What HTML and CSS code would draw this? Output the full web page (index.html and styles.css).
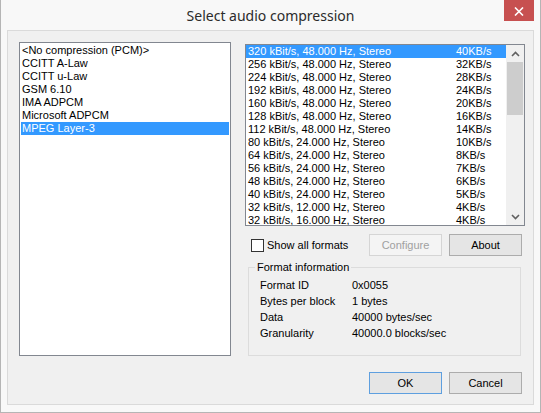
FILE: index.html
```html
<!DOCTYPE html>
<html>
<head>
<meta charset="utf-8">
<title>Select audio compression</title>
<link rel="stylesheet" href="styles.css">
</head>
<body>
<div class="window">
  <div class="titlebar">
    <div class="title">Select audio compression</div>
    <div class="close"><svg width="10" height="9" viewBox="0 0 10 9"><path d="M1 0.5 L9 8.5 M9 0.5 L1 8.5" stroke="#fff" stroke-width="1.6" fill="none"/></svg></div>
  </div>
  <div class="client">
    <div class="main">
      <div class="listbox formats">
        <div class="item">&lt;No compression (PCM)&gt;</div>
        <div class="item">CCITT A-Law</div>
        <div class="item">CCITT u-Law</div>
        <div class="item">GSM 6.10</div>
        <div class="item">IMA ADPCM</div>
        <div class="item">Microsoft ADPCM</div>
        <div class="item selected">MPEG Layer-3</div>
      </div>
      <div class="side">
        <div class="listbox attributes">
          <div class="rows">
            <div class="row selected"><span class="c1">320 kBit/s, 48.000 Hz, Stereo</span><span>40KB/s</span></div>
            <div class="row"><span class="c1">256 kBit/s, 48.000 Hz, Stereo</span><span>32KB/s</span></div>
            <div class="row"><span class="c1">224 kBit/s, 48.000 Hz, Stereo</span><span>28KB/s</span></div>
            <div class="row"><span class="c1">192 kBit/s, 48.000 Hz, Stereo</span><span>24KB/s</span></div>
            <div class="row"><span class="c1">160 kBit/s, 48.000 Hz, Stereo</span><span>20KB/s</span></div>
            <div class="row"><span class="c1">128 kBit/s, 48.000 Hz, Stereo</span><span>16KB/s</span></div>
            <div class="row"><span class="c1">112 kBit/s, 48.000 Hz, Stereo</span><span>14KB/s</span></div>
            <div class="row"><span class="c1">80 kBit/s, 24.000 Hz, Stereo</span><span>10KB/s</span></div>
            <div class="row"><span class="c1">64 kBit/s, 24.000 Hz, Stereo</span><span>8KB/s</span></div>
            <div class="row"><span class="c1">56 kBit/s, 24.000 Hz, Stereo</span><span>7KB/s</span></div>
            <div class="row"><span class="c1">48 kBit/s, 24.000 Hz, Stereo</span><span>6KB/s</span></div>
            <div class="row"><span class="c1">40 kBit/s, 24.000 Hz, Stereo</span><span>5KB/s</span></div>
            <div class="row"><span class="c1">32 kBit/s, 12.000 Hz, Stereo</span><span>4KB/s</span></div>
            <div class="row"><span class="c1">32 kBit/s, 16.000 Hz, Stereo</span><span>4KB/s</span></div>
          </div>
          <div class="scrollbar">
            <div class="arrow"><svg width="9" height="6" viewBox="0 0 9 6"><path d="M1 5 L4.5 1.5 L8 5" stroke="#606060" stroke-width="1.6" fill="none"/></svg></div>
            <div class="track"><div class="thumb"></div></div>
            <div class="arrow"><svg width="9" height="6" viewBox="0 0 9 6"><path d="M1 1 L4.5 4.5 L8 1" stroke="#606060" stroke-width="1.6" fill="none"/></svg></div>
          </div>
        </div>
        <div class="controls">
          <label class="check"><span class="box"></span>Show all formats</label>
          <div class="buttons">
            <button class="btn" disabled>Configure</button>
            <button class="btn">About</button>
          </div>
        </div>
        <fieldset class="group">
          <legend>Format information</legend>
          <div class="info">
            <span>Format ID</span><span>0x0055</span>
            <span>Bytes per block</span><span>1 bytes</span>
            <span>Data</span><span>40000 bytes/sec</span>
            <span>Granularity</span><span>40000.0 blocks/sec</span>
          </div>
        </fieldset>
      </div>
    </div>
    <div class="footer">
      <button class="btn default">OK</button>
      <button class="btn">Cancel</button>
    </div>
  </div>
</div>
</body>
</html>
```
FILE: styles.css
```css
html, body {
  margin: 0;
  padding: 0;
}
body {
  font-family: "Liberation Sans", Arial, sans-serif;
  font-size: 11px;
  color: #000;
  background: #fff;
}
.window {
  width: 541px;
  height: 413px;
  box-sizing: border-box;
  background: #f8f8f8;
  border: 1px solid #b5b5b5;
  border-top: none;
  display: flex;
  flex-direction: column;
}
.titlebar {
  height: 30px;
  flex: none;
  display: grid;
  grid-template-columns: 1fr auto 1fr;
  align-items: start;
}
.title {
  grid-column: 2;
  font-family: "Noto Sans", "Open Sans", sans-serif;
  font-size: 14px;
  line-height: 20px;
  padding-top: 6px;
  color: #2b2b2b;
  white-space: nowrap;
}
.close {
  grid-column: 3;
  justify-self: end;
  width: 30px;
  height: 21px;
  margin-right: 6px;
  background: #c75050;
  display: flex;
  align-items: center;
  justify-content: center;
}
.close svg { display: block; margin-top: 1px; }
.client {
  flex: 1;
  margin: 0 6px 7px 6px;
  border: 1px solid #dadada;
  background: #f0f0f0;
  padding: 11px 8px 0 11px;
  display: flex;
  flex-direction: column;
}
.main {
  display: flex;
  gap: 14px;
  height: 314px;
}
.listbox {
  box-sizing: border-box;
  border: 1px solid #828790;
  background: #fff;
}
.formats {
  width: 212px;
  height: 314px;
  padding: 1px 1px 0 1px;
}
.item {
  height: 13px;
  line-height: 13px;
  padding-left: 1px;
  white-space: nowrap;
}
.selected {
  background: #3399ff;
  color: #fff;
}
.side {
  width: 280px;
  display: flex;
  flex-direction: column;
}
.attributes {
  margin-top: 2px;
  height: 182px;
  display: flex;
}
.rows {
  flex: 1;
  overflow: hidden;
}
.row {
  height: 13px;
  line-height: 13px;
  padding-left: 2px;
  display: flex;
  white-space: nowrap;
}
.c1 { width: 208px; }
.scrollbar {
  width: 18px;
  background: #f0f0f0;
  display: flex;
  flex-direction: column;
}
.arrow {
  height: 17px;
  display: flex;
  align-items: center;
  justify-content: center;
}
.arrow svg { display: block; }
.track { flex: 1; }
.thumb {
  margin: 0 1px;
  height: 53px;
  background: #cdcdcd;
}
.controls {
  margin-top: 8px;
  height: 22px;
  display: flex;
  align-items: center;
  justify-content: space-between;
}
.check {
  display: flex;
  align-items: center;
  gap: 3px;
  margin-left: 6px;
}
.box {
  width: 13px;
  height: 13px;
  box-sizing: border-box;
  border: 1px solid #333;
  background: #fff;
}
.buttons {
  display: flex;
  gap: 7px;
  margin-right: 3px;
}
.btn {
  width: 73px;
  height: 22px;
  box-sizing: border-box;
  margin: 0;
  padding: 0;
  font-family: "Liberation Sans", Arial, sans-serif;
  font-size: 11px;
  color: #000;
  background: #e5e5e5;
  border: 1px solid #acacac;
  border-radius: 0;
}
.btn:disabled {
  color: #a0a0a0;
  background: #f4f4f4;
  border-color: #d5d5d5;
}
.btn.default {
  border-color: #5e9fdf;
}
.group {
  flex: 1;
  margin: 5px 4px 0 3px;
  padding: 0 6px;
  border: 1px solid #dcdcdc;
  min-width: 0;
}
.group legend {
  padding: 0 2px;
  line-height: 13px;
}
.info {
  margin: 3px 0 0 5px;
  display: grid;
  grid-template-columns: 92px auto;
  grid-auto-rows: 16px;
  line-height: 16px;
}
.footer {
  display: flex;
  justify-content: flex-end;
  gap: 7px;
  margin-top: 16px;
  padding-right: 3px;
}
```
